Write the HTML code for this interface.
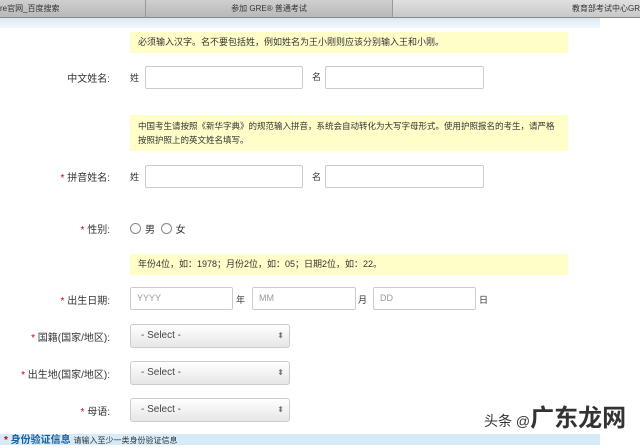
<!DOCTYPE html><html><head><meta charset="utf-8"><style>
body{margin:0;width:640px;height:445px;overflow:hidden;background:#fff;font-family:"Liberation Sans","Noto Sans CJK SC",sans-serif;font-size:9px;color:#333;position:relative}
.a{position:absolute}
.tab{top:0;height:17px;border-bottom:1px solid #888;background:linear-gradient(#cfcfcf,#b8b8b8);font-size:8px;color:#333;line-height:17px;text-align:center;border-right:1px solid #999}
.y{background:#fffdc8;left:130px;width:438px}
.in{border:1px solid #ccc;border-radius:2px;background:#fff;height:21px}
.lb{font-size:10px;text-align:right;width:110px;left:0}
.lb b{color:#c00;font-weight:normal}
.sel{left:130px;width:158px;height:22px;border:1px solid #ccc;border-radius:3px;background:linear-gradient(#fff,#e6e6e6);font-size:10px;line-height:22px;text-indent:10px;color:#444}
.sel:after{content:"⬍";position:absolute;right:5px;top:0;font-size:8px;color:#777;text-indent:0}
.ph{font-size:9px;color:#999;line-height:21px;text-indent:6px}
.r{display:inline-block;width:9px;height:9px;border:1px solid #888;border-radius:50%;vertical-align:-1px;margin-right:4px}
</style></head><body>
<div class="a tab" style="left:0;width:145px;text-align:left">re官网_百度搜索</div>
<div class="a tab" style="left:146px;width:246px">参加 GRE® 普通考试</div>
<div class="a tab" style="left:393px;width:247px;text-align:right;background:linear-gradient(#e0e0e0,#c8c8c8)">教育部考试中心GR</div>
<div class="a" style="top:18px;left:0;width:600px;height:10px;background:linear-gradient(#dbe9f5,#f3f8fc)"></div>
<div class="a y" style="top:32px;height:21px;line-height:21px;text-indent:8px">必须输入汉字。名不要包括姓，例如姓名为王小刚则应该分别输入王和小刚。</div>
<div class="a lb" style="top:70px">中文姓名:</div>
<div class="a" style="left:130px;top:71px;font-size:9px">姓</div>
<div class="a in" style="left:145px;top:66px;width:156px"></div>
<div class="a" style="left:312px;top:70px">名</div>
<div class="a in" style="left:325px;top:66px;width:157px"></div>
<div class="a y" style="top:115px;height:36px;padding:4px 8px;box-sizing:border-box;line-height:14px;font-size:8.5px">中国考生请按照《新华字典》的规范输入拼音，系统会自动转化为大写字母形式。使用护照报名的考生，请严格按照护照上的英文姓名填写。</div>
<div class="a lb" style="top:169px"><b>* </b>拼音姓名:</div>
<div class="a" style="left:130px;top:170px">姓</div>
<div class="a in" style="left:145px;top:165px;width:156px"></div>
<div class="a" style="left:312px;top:170px">名</div>
<div class="a in" style="left:325px;top:165px;width:157px"></div>
<div class="a lb" style="top:221px"><b>* </b>性别:</div>
<div class="a" style="left:130px;top:221px;font-size:10px"><span class="r"></span>男&nbsp;&nbsp;<span class="r"></span>女</div>
<div class="a y" style="top:254px;height:21px;line-height:21px;text-indent:8px">年份4位，如：1978；月份2位，如：05；日期2位，如：22。</div>
<div class="a lb" style="top:292px"><b>* </b>出生日期:</div>
<div class="a in ph" style="left:130px;top:287px;width:101px">YYYY</div>
<div class="a" style="left:236px;top:293px">年</div>
<div class="a in ph" style="left:252px;top:287px;width:102px">MM</div>
<div class="a" style="left:358px;top:293px">月</div>
<div class="a in ph" style="left:373px;top:287px;width:101px">DD</div>
<div class="a" style="left:479px;top:293px">日</div>
<div class="a lb" style="top:329px"><b>* </b>国籍(国家/地区):</div>
<div class="a sel" style="top:324px">- Select -</div>
<div class="a lb" style="top:366px"><b>* </b>出生地(国家/地区):</div>
<div class="a sel" style="top:361px">- Select -</div>
<div class="a lb" style="top:403px"><b>* </b>母语:</div>
<div class="a sel" style="top:398px">- Select -</div>
<div class="a" style="left:0;top:434px;width:600px;height:11px;background:#d6eaf8;font-size:10px;color:#1a5fa0;font-weight:bold;line-height:14px;text-indent:4px"><span style="color:#c00">*</span> 身份验证信息 <span style="font-weight:normal;font-size:8px;color:#333">请输入至少一类身份验证信息</span></div>
<div class="a" style="left:484px;top:398px;font-size:14px;color:#333;white-space:nowrap">头条 @<span style="font-size:24px;font-weight:bold">广东龙网</span></div>
</body></html>
